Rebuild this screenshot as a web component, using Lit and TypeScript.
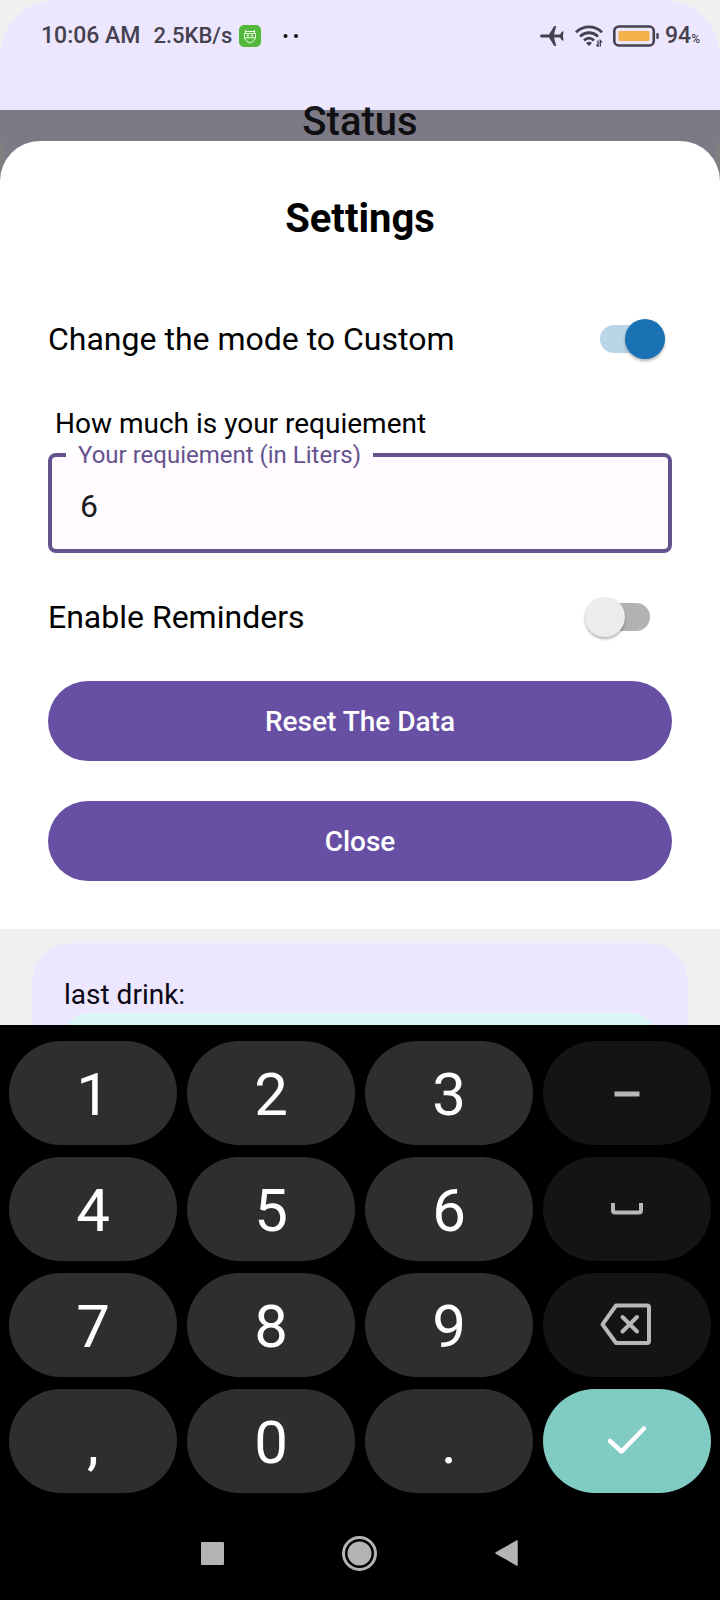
import { LitElement, html, css, svg } from "lit";
import { customElement, property, state } from "lit/decorators.js";
import { classMap } from "lit/directives/class-map.js";

@customElement("status-strip")
class StatusStrip extends LitElement {
  static styles = css`
    :host {
      display: flex;
      align-items: center;
      justify-content: space-between;
      padding: 20px 20px 0 41px;
      color: #45414f;
      font-weight: 500;
      line-height: 32px;
    }
    .group {
      display: flex;
      align-items: center;
    }
    .time {
      font-size: 23px;
    }
    .rate {
      font-size: 22px;
      margin-left: 13px;
    }
    .app {
      margin-left: 7px;
    }
    .dots {
      margin-left: 22px;
    }
    .wifi {
      margin-left: 11px;
    }
    .battery {
      margin-left: 10px;
    }
    .level {
      font-size: 23px;
      margin-left: 6px;
    }
    .percent {
      font-size: 12px;
      align-self: flex-end;
      line-height: 26px;
    }
    svg {
      display: block;
    }
  `;

  render() {
    return html`
      <div class="group">
        <span class="time">10:06 AM</span>
        <span class="rate">2.5KB/s</span>
        <svg class="app" width="22" height="22" viewBox="0 0 22 22" fill="none">
          <rect width="22" height="22" rx="5" fill="#52b93c" />
          <path
            d="M6.500 5 V8 M15.500 5 V8 M6.500 6.500 H15.500 M5.500 8.500 H16.500 V12 C16.500 15 13.500 17 11 18 C8.500 17 5.500 15 5.500 12 Z M5.500 12.800 H16.500"
            stroke="#eaffdf"
            stroke-width="1"
          />
          <path d="M8 10.600 h1.800 M12.200 10.600 h1.800" stroke="#fff" stroke-width="1.600" />
        </svg>
        <svg class="dots" width="16" height="4" viewBox="0 0 16 4">
          <circle cx="2.500" cy="2" r="2" fill="#111" />
          <circle cx="13" cy="2" r="2" fill="#111" />
        </svg>
      </div>
      <div class="group">
        <svg width="24" height="22" viewBox="0 0 24 22" fill="#45414f">
          <path
            d="M1.500 9.400 H9 L14.200 1 H16.200 L14 9.400 H20 L22 6.600 H23.600 L22.900 11 L23.600 15.400 H22 L20 12.600 H14 L16.200 21 H14.200 L9 12.600 H1.500 Q0 12.400 0 11 T1.500 9.400 Z"
          />
        </svg>
        <svg class="wifi" width="28" height="22" viewBox="0 0 28 22" fill="none" stroke="#45414f" stroke-width="2.800">
          <path d="M1 7.200 C8.500 0 19.500 0 27 7.200" />
          <path d="M5 11.500 C10.500 6.500 17.500 6.500 23 11.500" />
          <path d="M9 15.500 C12 12.500 16 12.500 19 15.500" />
          <path d="M11 18 L14 21 L17 18 Q14 15.600 11 18 Z" fill="#45414f" stroke="none" />
          <path d="M23 15.500 V21.500 L21.300 19.600 M25.300 21.500 V15.500 L27 17.400" stroke-width="1.400" />
        </svg>
        <svg class="battery" width="46" height="22" viewBox="0 0 46 22" fill="none">
          <rect x="1.300" y="1.500" width="39.500" height="19" rx="4.500" stroke="#45414f" stroke-width="2.600" />
          <rect x="5.500" y="6" width="31" height="10" fill="#f3b04b" />
          <rect x="43.300" y="8" width="2.400" height="6" rx="1" fill="#45414f" />
        </svg>
        <span class="level">94</span><span class="percent">%</span>
      </div>
    `;
  }
}

@customElement("settings-sheet")
class SettingsSheet extends LitElement {
  @state() custom = true;
  @state() reminders = false;

  static styles = css`
    :host {
      display: flex;
      flex-direction: column;
      padding: 52px 48px 48px;
      background: #fff;
      border-radius: 40px 40px 0 0;
      color: #000;
    }
    h2 {
      margin: 0 0 72px;
      font-size: 40px;
      font-weight: 700;
      line-height: 52px;
      text-align: center;
    }
    .row {
      display: flex;
      align-items: center;
      justify-content: space-between;
      font-size: 32px;
      line-height: 44px;
      padding-right: 7px;
    }
    .row.reminders {
      margin: 42px 0;
      padding-right: 22px;
    }
    .switch {
      appearance: none;
      display: grid;
      align-items: center;
      width: 65px;
      height: 40px;
      margin: 0;
      cursor: pointer;
    }
    .switch::before,
    .switch::after {
      content: "";
      grid-area: 1 / 1;
    }
    .switch::before {
      height: 28px;
      border-radius: 14px;
      background: #b2b2b2;
    }
    .switch::after {
      width: 40px;
      height: 40px;
      border-radius: 50%;
      background: #ececec;
      box-shadow: 0 2px 3px rgba(0, 0, 0, 0.3);
    }
    .switch:checked::before {
      background: #bad5e8;
    }
    .switch:checked::after {
      justify-self: end;
      background: #1a72b4;
    }
    .question {
      margin: 46px 0 0 7px;
      font-size: 28px;
      line-height: 34px;
    }
    fieldset {
      min-width: 0;
      margin: 0;
      padding: 0 28px;
      border: 4px solid #65528f;
      border-radius: 8px;
      background: #fffbfe;
    }
    legend {
      margin-left: -14px;
      padding: 0 12px;
      font-size: 24px;
      line-height: 28px;
      color: #65528f;
    }
    .amount {
      display: block;
      box-sizing: border-box;
      width: 100%;
      height: 80px;
      padding: 0 0 6px;
      border: 0;
      outline: 0;
      background: none;
      font: inherit;
      font-size: 32px;
      color: #1c1b1f;
    }
    .actions {
      display: grid;
      gap: 40px;
    }
    .action {
      height: 80px;
      border: 0;
      border-radius: 40px;
      background: #6750a4;
      color: #fff;
      font: inherit;
      font-size: 28px;
      font-weight: 500;
      cursor: pointer;
    }
  `;

  render() {
    return html`
      <h2>Settings</h2>
      <div class="row">
        <label for="mode">Change the mode to Custom</label>
        <input
          id="mode"
          class="switch"
          type="checkbox"
          .checked=${this.custom}
          @change=${(e: Event) => (this.custom = (e.target as HTMLInputElement).checked)}
        />
      </div>
      <p class="question">How much is your requiement</p>
      <fieldset>
        <legend><label for="amount">Your requiement (in Liters)</label></legend>
        <input id="amount" class="amount" type="text" inputmode="decimal" value="6" />
      </fieldset>
      <div class="row reminders">
        <label for="reminders">Enable Reminders</label>
        <input
          id="reminders"
          class="switch"
          type="checkbox"
          .checked=${this.reminders}
          @change=${(e: Event) => (this.reminders = (e.target as HTMLInputElement).checked)}
        />
      </div>
      <div class="actions">
        <button class="action" type="button">Reset The Data</button>
        <button class="action" type="button">Close</button>
      </div>
    `;
  }
}

type Key = { name: string; kind: "digit" | "tool" | "enter"; icon?: unknown };

const digit = (name: string): Key => ({ name, kind: "digit" });

const KEYS: Key[] = [
  digit("1"),
  digit("2"),
  digit("3"),
  {
    name: "Minus",
    kind: "tool",
    icon: svg`<path d="M17.500 31 H42.500" stroke-width="5" stroke-linecap="butt" />`,
  },
  digit("4"),
  digit("5"),
  digit("6"),
  {
    name: "Space",
    kind: "tool",
    icon: svg`<path d="M16 24 V31.500 Q16 33.500 18 33.500 H42 Q44 33.500 44 31.500 V24" stroke-width="4" stroke-linecap="butt" />`,
  },
  digit("7"),
  digit("8"),
  digit("9"),
  {
    name: "Delete",
    kind: "tool",
    icon: svg`<path d="M19 10.500 H50 Q52 10.500 52 12.500 V46 Q52 48 50 48 H19 L5.500 29.300 Z" stroke-width="4" /><path d="M25.500 22 L40 36.500 M40 22 L25.500 36.500" stroke-width="4" />`,
  },
  digit(","),
  digit("0"),
  digit("."),
  {
    name: "Done",
    kind: "enter",
    icon: svg`<path d="M13 30 L24.500 40.500 L47 17.500" stroke-width="4.500" />`,
  },
];

@customElement("number-pad")
class NumberPad extends LitElement {
  @property({ attribute: false }) keys: Key[] = KEYS;

  static styles = css`
    :host {
      display: block;
      background: #000;
      padding: 16px 9px 0;
    }
    .pad {
      display: grid;
      grid-template-columns: repeat(4, 1fr);
      gap: 12px 10px;
    }
    .key {
      display: grid;
      place-items: center;
      box-sizing: border-box;
      height: 104px;
      padding: 0;
      border: 0;
      border-radius: 52px;
      background: #2e2e2e;
      color: #fff;
      font: inherit;
      font-size: 60px;
      line-height: 72px;
    }
    .digit {
      padding-top: 4px;
    }
    .tool {
      background: #141414;
      color: #b8b8b8;
    }
    .enter {
      background: #80cbc4;
    }
    .nav {
      display: flex;
      align-items: center;
      justify-content: center;
      gap: 118px;
      box-sizing: border-box;
      height: 108px;
      padding: 12px 2px 0 0;
    }
    .nav-button {
      display: block;
      padding: 0;
      border: 0;
      background: none;
      color: #b4b4b4;
    }
    svg {
      display: block;
    }
  `;

  render() {
    return html`
      <div class="pad">
        ${this.keys.map(
          (key) => html`<button
            type="button"
            class=${classMap({ key: true, [key.kind]: true })}
            aria-label=${key.name}
          >
            ${key.icon
              ? html`<svg
                  width="60"
                  height="60"
                  viewBox="0 0 60 60"
                  fill="none"
                  stroke="currentColor"
                  stroke-linecap="round"
                  stroke-linejoin="round"
                >
                  ${key.icon}
                </svg>`
              : key.name}
          </button>`
        )}
      </div>
      <div class="nav">
        <button class="nav-button" type="button" aria-label="Recent apps">
          <svg width="23" height="23" viewBox="0 0 23 23"><rect width="23" height="23" rx="1" fill="currentColor" /></svg>
        </button>
        <button class="nav-button" type="button" aria-label="Home">
          <svg width="35" height="35" viewBox="0 0 35 35">
            <circle cx="17.500" cy="17.500" r="16" fill="none" stroke="currentColor" stroke-width="3" />
            <circle cx="17.500" cy="17.500" r="12" fill="currentColor" />
          </svg>
        </button>
        <button class="nav-button" type="button" aria-label="Back">
          <svg width="23" height="26" viewBox="0 0 23 26">
            <path d="M1 13 L22 1 V25 Z" fill="currentColor" stroke="currentColor" stroke-width="1.500" stroke-linejoin="round" />
          </svg>
        </button>
      </div>
    `;
  }
}

@customElement("app-root")
class AppRoot extends LitElement {
  static styles = css`
    :host {
      display: flex;
      flex-direction: column;
      min-height: 100vh;
      background: #f0f0f0;
      font-family: Roboto, "Liberation Sans", sans-serif;
    }
    .stage {
      display: grid;
      align-items: start;
    }
    .header,
    .scrim {
      grid-area: 1 / 1;
    }
    .header {
      padding-bottom: 40px;
      border-radius: 56px;
      background: #ece7fe;
    }
    h1 {
      margin: 44px 0 0;
      font-size: 40px;
      font-weight: 500;
      line-height: 52px;
      text-align: center;
      color: #1c1b1f;
    }
    .scrim {
      margin-top: 110px;
      padding-top: 31px;
      background: linear-gradient(rgba(0, 0, 0, 0.47) 120px, transparent 120px);
    }
    .history {
      box-sizing: border-box;
      flex: 1 0 96px;
      height: 0;
      overflow: hidden;
      padding: 14px 32px 0;
    }
    .card {
      padding: 34px 32px 0;
      border-radius: 40px 40px 0 0;
      background: #ece7fe;
      color: #0a0614;
    }
    .caption {
      margin: 0;
      font-size: 28px;
      line-height: 36px;
    }
    .entry {
      height: 60px;
      border-radius: 24px 24px 0 0;
      background: #dcf5f7;
    }
  `;

  render() {
    return html`
      <div class="stage">
        <header class="header">
          <status-strip></status-strip>
          <h1>Status</h1>
        </header>
        <div class="scrim"><settings-sheet></settings-sheet></div>
      </div>
      <section class="history">
        <div class="card">
          <p class="caption">last drink:</p>
          <div class="entry"></div>
        </div>
      </section>
      <number-pad></number-pad>
    `;
  }
}
